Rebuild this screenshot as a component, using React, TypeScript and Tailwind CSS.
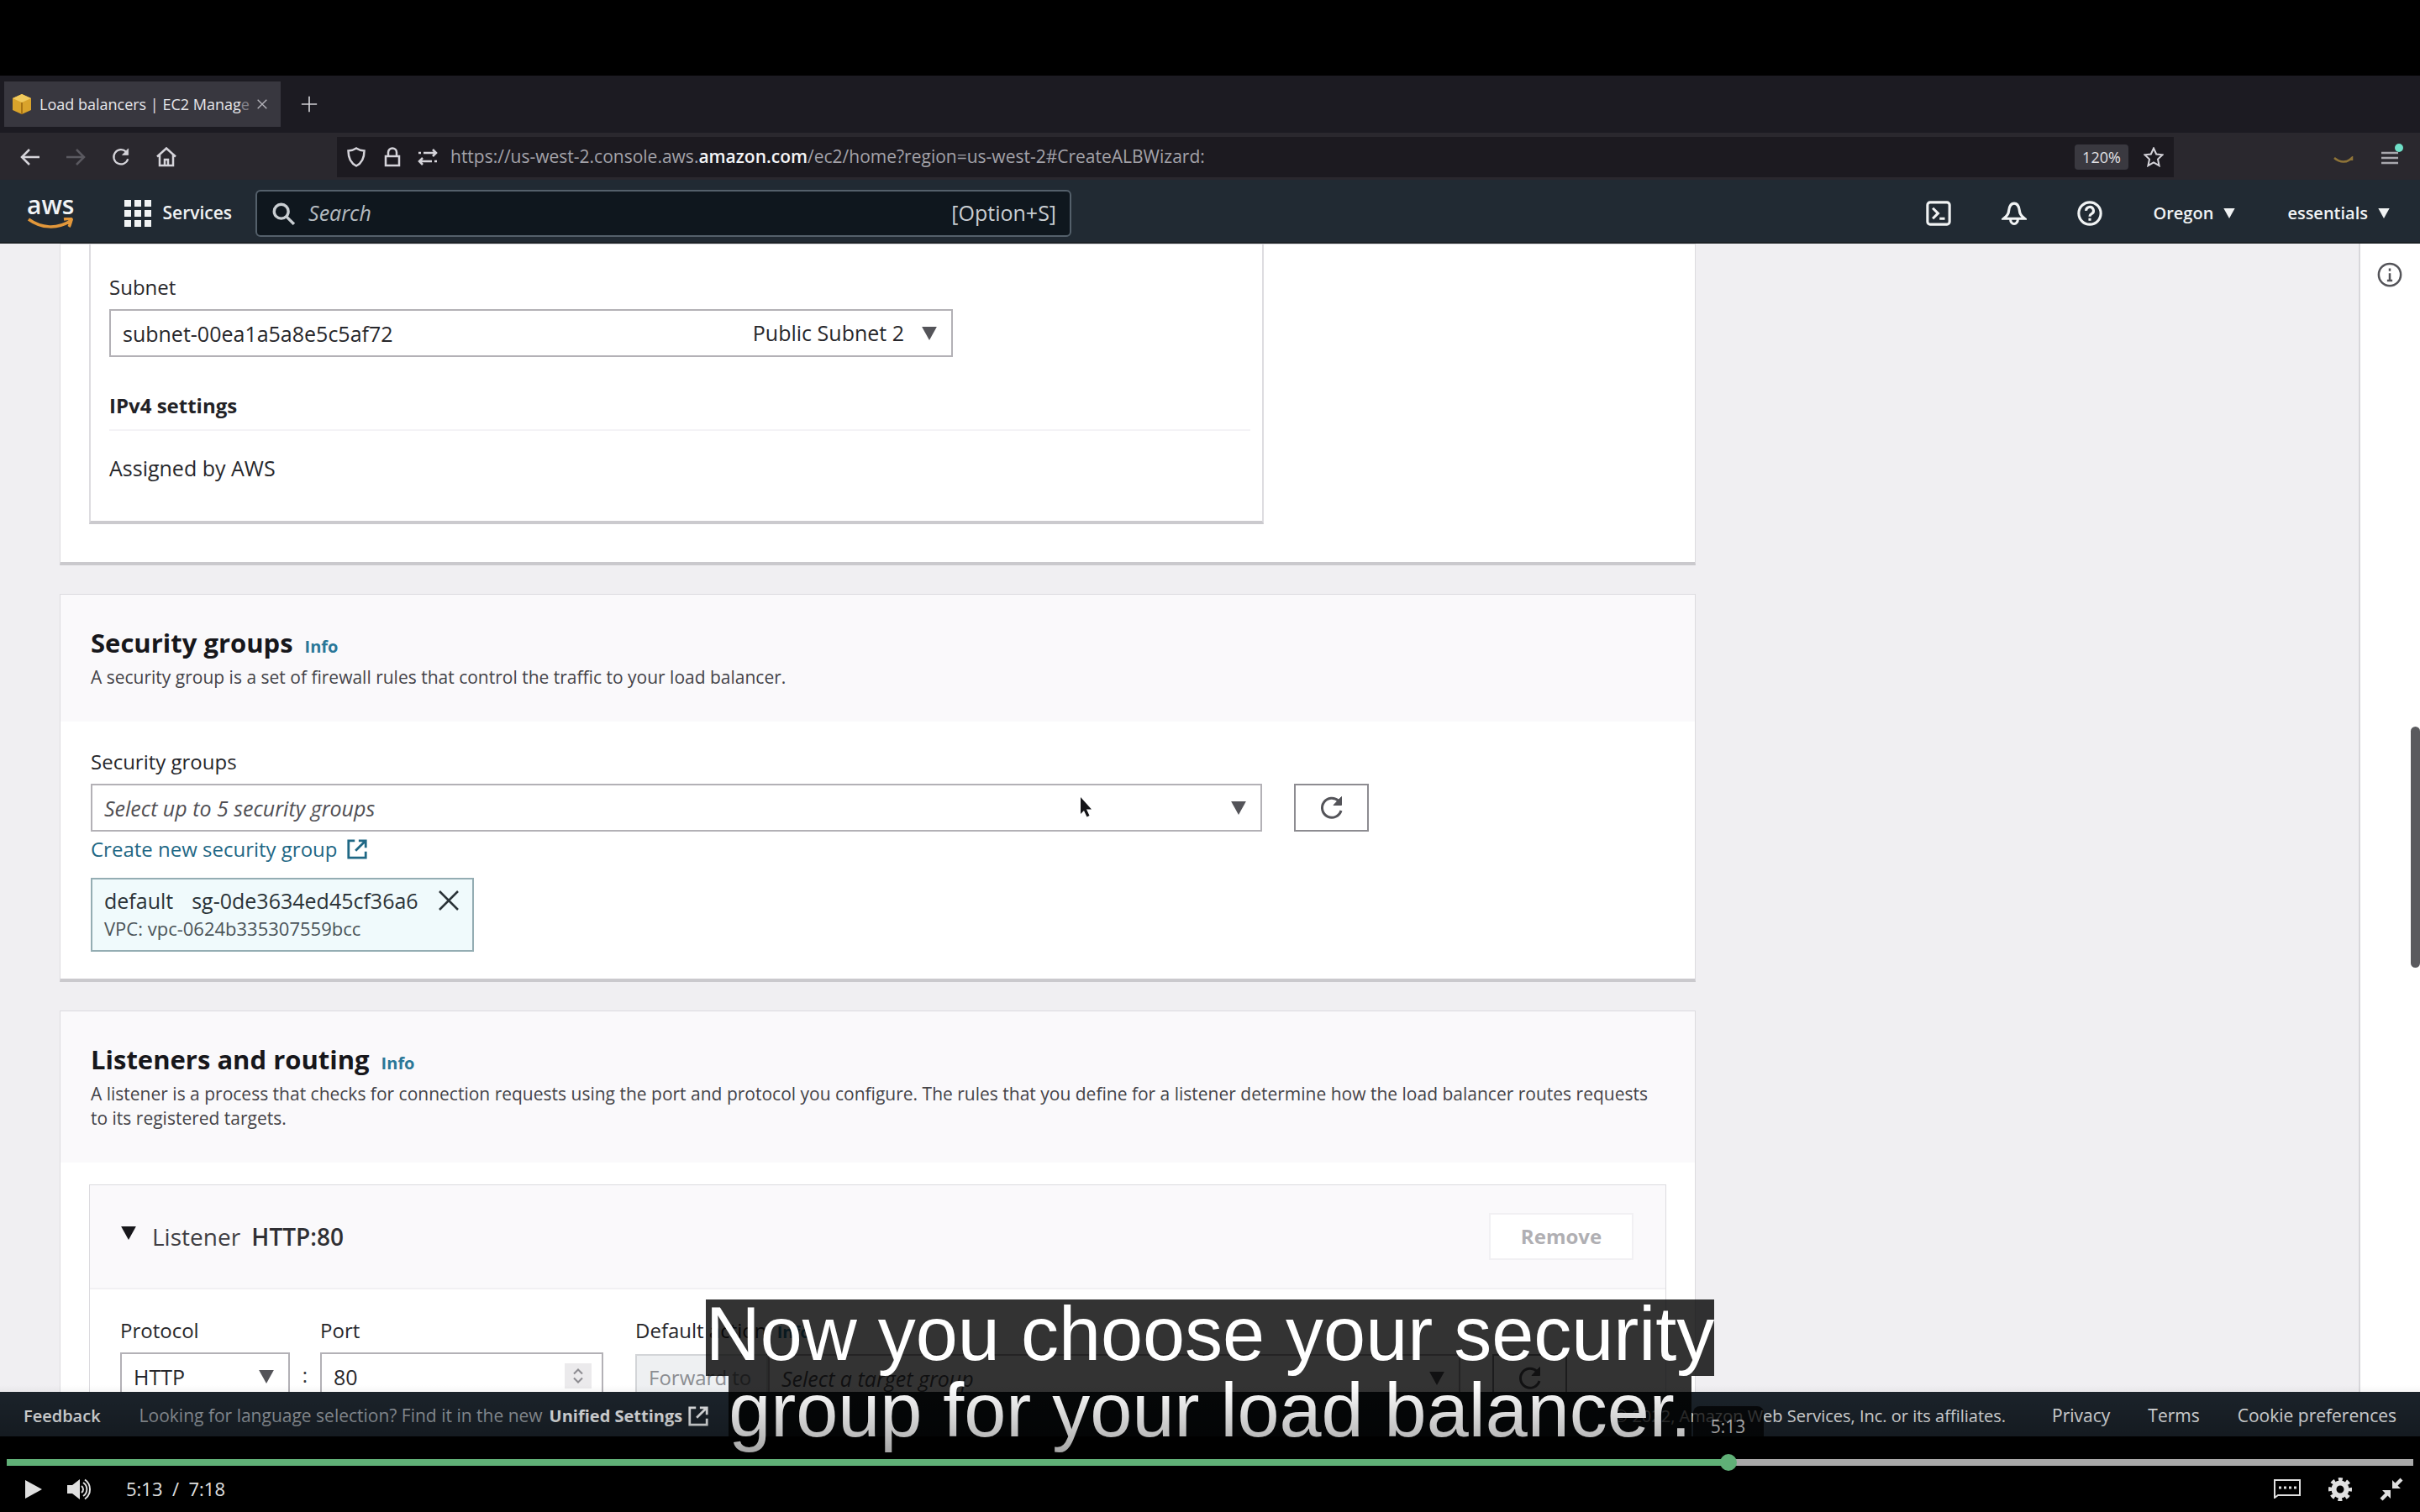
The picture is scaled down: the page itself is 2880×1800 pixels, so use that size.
import type { ReactNode } from "react";

type IconProps = { className?: string };

const ui = "font-['Open_Sans','Noto_Sans',sans-serif]";

function ReloadIcon({ className }: IconProps) {
  return (
    <svg viewBox="0 0 32 32" className={className} fill="none" stroke="currentColor" strokeWidth="3" aria-hidden="true">
      <path d="M27 19a11.500 11.500 0 1 1-3-11.500" />
      <path d="M27.500 2.500v10H18z" fill="currentColor" strokeWidth="1" />
    </svg>
  );
}

function ExternalIcon({ className }: IconProps) {
  return (
    <svg viewBox="0 0 28 28" className={className} fill="none" stroke="currentColor" strokeWidth="3" aria-hidden="true">
      <path d="M11 3H3v22h22v-8" />
      <path d="M16 3h9v9M25 3 12 16" />
    </svg>
  );
}

function Caret({ className }: IconProps) {
  return (
    <svg viewBox="0 0 20 18" className={className} fill="currentColor" aria-hidden="true">
      <path d="M0 0h20L10 18z" />
    </svg>
  );
}

function Icon({ children, className, width = 2 }: { children: ReactNode; className: string; width?: number }) {
  return (
    <svg viewBox="0 0 24 24" className={className} fill="none" stroke="currentColor" strokeWidth={width} aria-hidden="true">
      {children}
    </svg>
  );
}

function BrowserChrome() {
  return (
    <header className="shrink-0">
      <div className="flex h-[68px] items-center bg-[#1c1b22] pl-[5px] text-[#e6e6ea]">
        <div className="flex h-[54px] w-[329px] items-center bg-[#38373f] pr-[14px] pl-[10px]">
          <svg viewBox="0 0 22 24" className="h-6 w-[22px] shrink-0" aria-hidden="true">
            <path d="M11 0 22 5v14l-11 5L0 19V5z" fill="#d9a32b" />
            <path d="M11 0 22 5l-11 5L0 5z" fill="#f0c95c" />
            <path d="M10 10h2v14h-2z" fill="#a87415" />
          </svg>
          <span className="ml-[10px] min-w-0 flex-1 text-[18px] whitespace-nowrap">
            Load balancers | EC2 Manag<span className="text-[#85848c]">e</span>
          </span>
          <button aria-label="Close tab" className="text-[#b5b4bb]">
            <Icon className="h-4 w-4">
              <path d="m4 4 16 16M20 4 4 20" />
            </Icon>
          </button>
        </div>
        <button aria-label="New tab" className="ml-6 text-[#d0d0d4]">
          <Icon className="h-5 w-5">
            <path d="M12 1v22M1 12h22" />
          </Icon>
        </button>
      </div>
      <div className="flex h-[56px] items-center bg-[#2a282e] pt-[2px] text-[#d5d4da]">
        <div className="flex w-[401px] shrink-0 items-center gap-[30px] pl-6">
          <button aria-label="Back">
            <Icon className="h-6 w-6" width={2.5}>
              <path d="M23 12H2M11 3l-9 9 9 9" />
            </Icon>
          </button>
          <button aria-label="Forward" className="text-[#5a5960]">
            <Icon className="h-6 w-6" width={2.5}>
              <path d="M1 12h21M13 3l9 9-9 9" />
            </Icon>
          </button>
          <button aria-label="Reload">
            <ReloadIcon className="h-6 w-6" />
          </button>
          <button aria-label="Home">
            <Icon className="h-6 w-6" width={2.5}>
              <path d="M1 11.500 12 1.500l11 10M4 9.500V22h16V9.500" />
              <path d="M10 22v-7h4v7" />
            </Icon>
          </button>
        </div>
        <div className="flex h-[48px] min-w-0 flex-1 items-center bg-[#1c1a20] pr-3 pl-[11px]">
          <Icon className="h-6 w-6" width={2.5}>
            <path d="M12 1.500c3 2 6 2.800 9.500 3C21.500 13 19 19 12 22.500 5 19 2.500 13 2.500 4.500 6 4.300 9 3.500 12 1.500z" />
          </Icon>
          <Icon className="ml-[19px] h-6 w-6" width={2.5}>
            <path d="M4 11h16v11H4zM7 11V6.500a5 5 0 0 1 10 0V11" />
          </Icon>
          <Icon className="ml-[18px] h-6 w-6" width={2.5}>
            <path d="M7 7h15M18 3l4 4-4 4M17 17H2M6 13l-4 4 4 4" />
            <path d="M1 7h3M20 17h3" />
          </Icon>
          <div className="ml-[15px] min-w-0 flex-1 text-[21px] whitespace-nowrap text-[#a3a2a9]">
            https://us-west-2.console.aws.<span className="font-semibold text-[#f4f4f6]">amazon.com</span>/ec2/home?region=us-west-2#CreateALBWizard:
          </div>
          <button className="mr-[18px] h-[30px] w-[64px] rounded-sm bg-[#3a3940] text-[18px] leading-[30px] text-[#e0e0e4]">120%</button>
          <button aria-label="Bookmark">
            <Icon className="h-6 w-6">
              <path d="m12 1.500 3.200 7 7.300.8-5.500 5.200 1.600 7.700-6.600-3.900-6.600 3.900 1.600-7.700L1.500 9.300l7.300-.8z" />
            </Icon>
          </button>
        </div>
        <div className="flex w-[293px] shrink-0 items-center justify-end gap-[30px] pr-6">
          <svg viewBox="0 0 26 10" className="mt-2 h-[10px] w-[26px]" fill="none" stroke="#8f7438" strokeWidth="2.500" aria-hidden="true">
            <path d="M2 2c7 6 15 6 21 0v3" />
          </svg>
          <button aria-label="Open menu" className="relative text-[#a9a8ae]">
            <Icon className="h-6 w-6" width={2.5}>
              <path d="M2 7h20M2 13h20M2 19h20" />
            </Icon>
            <span className="absolute -top-1 -right-1 h-[10px] w-[10px] rounded-full bg-[#6fe0c8]" />
          </button>
        </div>
      </div>
    </header>
  );
}

function ConsoleNav() {
  return (
    <nav className="flex h-[76px] shrink-0 items-center border-b-2 border-[#1c2226] bg-[#212a33] pt-[6px] text-[20px] text-[#f1f3f4]">
      <a href="#home" aria-label="AWS home" className="ml-8 flex flex-col items-center">
        <span className="h-[26px] text-[30px] leading-[20px] font-semibold">aws</span>
        <svg viewBox="0 0 56 16" className="-mt-px h-4 w-14" fill="none" stroke="#e2973a" strokeWidth="3.500" aria-hidden="true">
          <path d="M2 2c15 11 34 12 50 2M44 2c7-1 10-1 9 1s-1 5-3 8" />
        </svg>
      </a>
      <button className="ml-[60px] flex items-center gap-[13px]">
        <svg viewBox="0 0 32 32" className="h-8 w-8" fill="currentColor" aria-hidden="true">
          <path d="M0 0h8v8H0zM12 0h8v8h-8zM24 0h8v8h-8zM0 12h8v8H0zM12 12h8v8h-8zM24 12h8v8h-8zM0 24h8v8H0zM12 24h8v8h-8zM24 24h8v8h-8z" />
        </svg>
        <span className="text-[21px] font-semibold">Services</span>
      </button>
      <div className="ml-7 flex h-[56px] w-[971px] items-center rounded-md border-2 border-[#54606b] bg-[#0f171e] pr-4 pl-[18px] text-[#c9ced2]">
        <Icon className="h-[27px] w-[27px]" width={3}>
          <circle cx="9.500" cy="9.500" r="7.500" />
          <path d="m15 15 8 8" />
        </Icon>
        <input aria-label="Search" placeholder="Search" className="ml-4 min-w-0 flex-1 bg-transparent text-[25px] outline-none placeholder:text-[#b4babf] placeholder:italic" />
        <span className="text-[25px]">[Option+S]</span>
      </div>
      <div className="ml-auto flex items-center">
        <button aria-label="CloudShell">
          <Icon className="h-[30px] w-[30px]" width={2.5}>
            <rect x="1.500" y="1.500" width="21" height="21" rx="2.500" />
            <path d="m6.500 7 5 5-5 5M13 17h5" />
          </Icon>
        </button>
        <button aria-label="Notifications" className="ml-[60px]">
          <Icon className="h-[30px] w-[30px]" width={2.5}>
            <path d="M12 2.500c-3 0-4.500 3-5 6.500-.4 4-2 5.500-5 8h20c-3-2.500-4.600-4-5-8-.5-3.500-2-6.500-5-6.500zM8.500 17.500a3.500 4.500 0 0 0 7 0" />
          </Icon>
        </button>
        <button aria-label="Help" className="ml-[60px]">
          <Icon className="h-[30px] w-[30px]" width={2.5}>
            <circle cx="12" cy="12" r="10.500" />
            <path d="M8.500 9.500a3.500 3.500 0 1 1 5.200 3c-1.200.700-1.700 1.200-1.700 2.500M12 16.500v2.500" />
          </Icon>
        </button>
        <button className="ml-[60px] flex items-center gap-3 font-semibold">
          Oregon <Caret className="h-3 w-[14px]" />
        </button>
        <button className="mr-9 ml-[62px] flex items-center gap-3 font-semibold">
          essentials <Caret className="h-3 w-[14px]" />
        </button>
      </div>
    </nav>
  );
}

const field = "w-full appearance-none border-2 border-[#b3b1b6] bg-white px-[14px] text-[25px] leading-[52px] h-[57px] outline-none";
const label = "block text-[24px] leading-[32px] text-[#27272b]";

function Dropdown({ id, value, detail, placeholder }: { id: string; value: string; detail?: string; placeholder?: boolean }) {
  return (
    <div className="relative w-full">
      <select id={id} className={`${field} ${placeholder ? "text-[#504f54] italic" : "text-[#27272b]"}`}>
        <option>{value}</option>
      </select>
      {detail && <span className="pointer-events-none absolute inset-y-0 right-[58px] flex items-center text-[25px] text-[#27272b]">{detail}</span>}
      <span className="pointer-events-none absolute inset-y-0 right-[18px] flex items-center text-[#545459]">
        <Caret className="h-4 w-5" />
      </span>
    </div>
  );
}

function Card({ children, className = "" }: { children: ReactNode; className?: string }) {
  return <section className={`border border-[#dcdbdf] border-b-4 border-b-[#cac9cd] bg-white ${className}`}>{children}</section>;
}

function CardHeading({ title, children }: { title: string; children: ReactNode }) {
  return (
    <div className="bg-[#faf9fb] pt-[37px] pr-12 pb-[38px] pl-9">
      <h2 className="flex items-baseline gap-[14px] text-[31px] leading-10 font-bold text-[#17171b]">
        {title}
        <a href="#info" className="text-[20px] font-bold text-[#2a7798]">Info</a>
      </h2>
      <p className="mt-[2px] text-[21px] leading-[29px] text-[#444348]">{children}</p>
    </div>
  );
}

function RefreshButton() {
  return (
    <button aria-label="Refresh" className="flex h-[57px] w-[89px] shrink-0 items-center justify-center border-2 border-[#8d8c91] bg-white text-[#545459]">
      <ReloadIcon className="h-8 w-8" />
    </button>
  );
}

function SubnetCard() {
  return (
    <Card className="px-[34px] pb-[45px]">
      <div className="w-[1398px] max-w-full border-2 border-t-0 border-b-4 border-[#dddce0] border-b-[#cbcace] px-[22px] pt-[35px] pb-[47px]">
        <label htmlFor="subnet" className={label}>Subnet</label>
        <div className="mt-[10px] w-[1004px] max-w-full">
          <Dropdown id="subnet" value="subnet-00ea1a5a8e5c5af72" detail="Public Subnet 2" />
        </div>
        <h3 className="mt-[42px] text-[24px] leading-[32px] font-bold text-[#222226]">IPv4 settings</h3>
        <div className="mt-3 -mr-2 border-b-2 border-[#f4f3f6]" />
        <p className="mt-[28px] text-[25px] leading-[32px] text-[#27272b]">Assigned by AWS</p>
      </div>
    </Card>
  );
}

function SecurityGroupsCard() {
  return (
    <Card>
      <CardHeading title="Security groups">A security group is a set of firewall rules that control the traffic to your load balancer.</CardHeading>
      <div className="px-9 pt-8 pb-8">
        <label htmlFor="groups" className={label}>Security groups</label>
        <div className="mt-[10px] flex items-center gap-[38px]">
          <div className="relative w-[1394px]">
            <Dropdown id="groups" value="Select up to 5 security groups" placeholder />
            <svg viewBox="0 0 14 24" className="pointer-events-none absolute top-4 right-[203px] h-6 w-[14px]" aria-hidden="true">
              <path d="M1 0v20l4-4 3.500 7.500 3-1.500L8 14.500h6z" fill="#141418" />
            </svg>
          </div>
          <RefreshButton />
        </div>
        <a href="#create" className="mt-[5px] flex items-center gap-[10px] text-[24px] leading-[32px] text-[#1f6885]">
          Create new security group <ExternalIcon className="h-[26px] w-[26px]" />
        </a>
        <div className="mt-[18px] flex h-[88px] w-[456px] flex-col justify-center border-2 border-[#94adb3] bg-[#f0fafc] pr-4 pl-[14px]">
          <div className="flex items-center text-[25px] leading-[32px] text-[#2b3338]">
            <span>default</span>
            <span className="ml-[22px]">sg-0de3634ed45cf36a6</span>
            <button aria-label="Remove default" className="ml-auto">
              <Icon className="h-6 w-6" width={2.5}>
                <path d="m1 1 22 22M23 1 1 23" />
              </Icon>
            </button>
          </div>
          <div className="text-[22px] leading-[34px] text-[#4b5459]">VPC: vpc-0624b335307559bcc</div>
        </div>
      </div>
    </Card>
  );
}

function ListenersCard() {
  return (
    <Card>
      <CardHeading title="Listeners and routing">
        A listener is a process that checks for connection requests using the port and protocol you configure. The rules that you define for a listener determine how the load balancer routes requests to its registered targets.
      </CardHeading>
      <div className="px-[34px] pt-[26px]">
        <div className="border border-[#dcdbdf]">
          <div className="flex h-[124px] items-center border-b-2 border-[#f1f0f3] bg-[#faf9fb] pr-[38px] pl-9">
            <button aria-label="Collapse listener" className="mb-2 text-[#17171b]">
              <Caret className="h-4 w-5" />
            </button>
            <h3 className="ml-[18px] text-[28px] text-[#3f3e43]">
              Listener <b className="ml-[6px] font-semibold text-[#303034]">HTTP:80</b>
            </h3>
            <button disabled className="ml-auto h-[56px] w-[172px] border-2 border-[#f1f0f3] bg-white text-[24px] font-bold text-[#b0afb3]">Remove</button>
          </div>
          <div className="flex px-9 pt-[33px] pb-10">
            <div className="w-[202px]">
              <label htmlFor="protocol" className={label}>Protocol</label>
              <div className="mt-[10px]"><Dropdown id="protocol" value="HTTP" /></div>
            </div>
            <span className="mt-[51px] w-[36px] text-center text-[24px] text-[#3a3a3e]">:</span>
            <div className="w-[337px]">
              <label htmlFor="port" className={label}>Port</label>
              <div className="relative mt-[10px]">
                <input id="port" defaultValue="80" className={`${field} text-[#27272b]`} />
                <span className="absolute top-[13px] right-[14px] flex h-[30px] w-8 items-center justify-center bg-[#ebeaec] text-[#8d8c91]">
                  <Icon className="h-5 w-5" width={2.5}>
                    <path d="m6 9 6-6 6 6M6 15l6 6 6-6" />
                  </Icon>
                </span>
              </div>
            </div>
            <div className="ml-[38px]">
              <label htmlFor="target" className={label}>
                Default action <span className="ml-[6px] text-[20px] font-bold text-[#2a7798]">Info</span>
              </label>
              <div className="mt-[10px] flex">
                <div className="h-[57px] w-[158px] border-2 border-[#d3d5d8] bg-[#eef0f2] px-[14px] text-[24px] leading-[52px] text-[#8b8d91]">Forward to</div>
                <div className="w-[824px]">
                  <Dropdown id="target" value="Select a target group" placeholder />
                </div>
                <div className="ml-[38px]"><RefreshButton /></div>
              </div>
            </div>
          </div>
        </div>
      </div>
    </Card>
  );
}

function ConsoleFooter() {
  return (
    <footer className="flex h-[53px] shrink-0 items-center bg-[#1c242c] px-7 pt-1 text-[20px] whitespace-nowrap text-[#eceef0]">
      <a href="#feedback" className="font-semibold">Feedback</a>
      <span className="ml-[46px] text-[21px] text-[#979da3]">Looking for language selection? Find it in the new</span>
      <a href="#settings" className="ml-2 flex items-center gap-[6px] font-bold">
        Unified Settings <ExternalIcon className="h-[26px] w-[26px]" />
      </a>
      <span className="ml-auto">© 2022, Amazon Web Services, Inc. or its affiliates.</span>
      <a href="#privacy" className="ml-[55px] text-[21px]">Privacy</a>
      <a href="#terms" className="ml-[45px] text-[21px]">Terms</a>
      <a href="#cookies" className="ml-[45px] text-[21px]">Cookie preferences</a>
    </footer>
  );
}

function Captions() {
  const line = "h-[91px] bg-black/80 text-[90px] leading-[82px] whitespace-nowrap text-white";
  return (
    <div className="pointer-events-none absolute inset-x-0 bottom-[71px] flex flex-col items-center font-['Liberation_Sans',Arial,sans-serif]">
      <span className={line}>Now you choose your security</span>
      <span className={line}>group for your load balancer.</span>
      <div className="absolute inset-x-0 bottom-0 h-20 bg-linear-to-b from-transparent to-black/35" />
    </div>
  );
}

function PlayerControls() {
  return (
    <div className="relative h-[90px] shrink-0 px-2 text-[#e0e0e0]">
      <div className="relative mt-[27px] h-2 bg-[#a9a9a9]">
        <div className="h-2 w-[71.6%] bg-[#60b077]" />
        <span className="absolute -top-[6px] left-[71.6%] -ml-[12px] h-5 w-5 rounded-full bg-[#60b077]" />
        <span className="absolute bottom-[35px] left-[71.6%] -ml-[44px] h-9 w-[84px] rounded-t-lg bg-black/75 text-center text-[21px] leading-[48px] text-[#d0d0d0]">5:13</span>
        <input aria-label="Seek" type="range" min={0} max={438} defaultValue={313} className="absolute inset-0 h-2 w-full opacity-0" />
      </div>
      <div className="flex h-[55px] items-center">
        <button aria-label="Play" className="ml-[22px]">
          <svg viewBox="0 0 20 22" className="h-[22px] w-5" fill="currentColor" aria-hidden="true">
            <path d="M0 0v22l20-11z" />
          </svg>
        </button>
        <button aria-label="Mute" className="ml-[30px]">
          <svg viewBox="0 0 32 26" className="h-[26px] w-8" fill="currentColor" aria-hidden="true">
            <path d="M0 8h6l9-7v24l-9-7H0z" />
            <path d="M17 9a5 5 0 0 1 0 8M19 5a9.500 9.500 0 0 1 0 16M21 1.500a14 14 0 0 1 0 23" fill="none" stroke="currentColor" strokeWidth="2" />
          </svg>
        </button>
        <span className="ml-[38px] text-[22px]">5:13&nbsp; /&nbsp; 7:18</span>
        <button aria-label="Captions" className="ml-auto">
          <svg viewBox="0 0 32 23" className="h-[23px] w-8" fill="none" stroke="currentColor" strokeWidth="2" aria-hidden="true">
            <path d="M1 1h30v18H5l-4 3z" />
            <path d="M6 10h3M12 10h3M18 10h3M24 10h3" strokeWidth="3" />
          </svg>
        </button>
        <button aria-label="Settings" className="ml-[33px]">
          <svg viewBox="0 0 28 28" className="h-7 w-7" fill="none" stroke="currentColor" aria-hidden="true">
            <circle cx="14" cy="14" r="7.500" strokeWidth="6" />
            <circle cx="14" cy="14" r="12" strokeWidth="4" strokeDasharray="5 4.425" strokeDashoffset="2.500" />
          </svg>
        </button>
        <button aria-label="Exit full screen" className="mr-3 ml-[33px]">
          <svg viewBox="0 0 28 28" className="h-7 w-7" fill="currentColor" aria-hidden="true">
            <path d="M15 3v10h10l-3.500-3.500 6-6L24.500.5l-6 6zM13 25V15H3l3.500 3.500-6 6 3 3 6-6z" />
          </svg>
        </button>
      </div>
    </div>
  );
}

export default function App() {
  return (
    <div className={`relative flex h-screen flex-col overflow-hidden bg-black pt-[90px] ${ui}`}>
      <BrowserChrome />
      <ConsoleNav />
      <div className="flex min-h-0 flex-1 overflow-hidden bg-[#f0eff2]">
        <main className="min-w-0 flex-1 overflow-hidden px-[71px]">
          <div className="flex max-w-[1947px] flex-col gap-[34px]">
            <SubnetCard />
            <SecurityGroupsCard />
            <ListenersCard />
          </div>
        </main>
        <aside className="relative w-[73px] shrink-0 border-l-2 border-[#d8d7db] bg-white">
          <button aria-label="Open help panel" className="mt-[22px] ml-5 text-[#545459]">
            <Icon className="h-[30px] w-[30px]">
              <circle cx="12" cy="12" r="10.500" />
              <path d="M12 6v2.500M12 10.500v7M9.500 17.500h5" />
            </Icon>
          </button>
          <div className="absolute top-[575px] right-0 h-[287px] w-[11px] rounded-full bg-[#5a5a5e]" />
        </aside>
      </div>
      <ConsoleFooter />
      <PlayerControls />
      <Captions />
    </div>
  );
}
